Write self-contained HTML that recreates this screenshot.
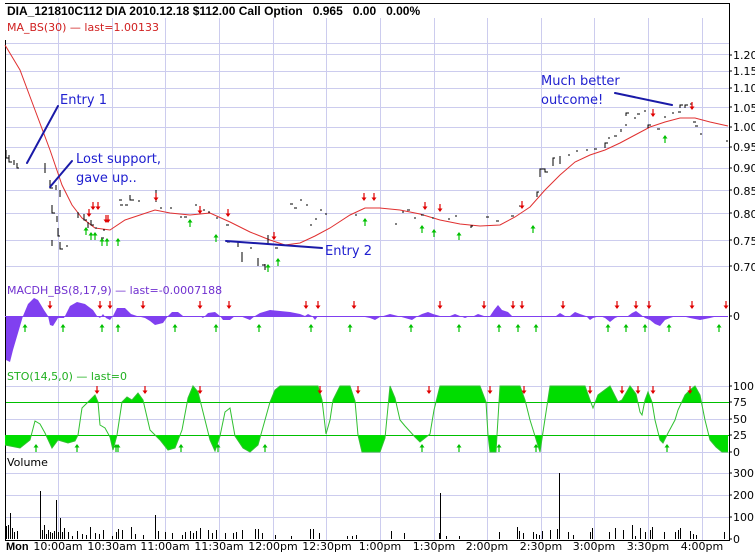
<!DOCTYPE html>
<html><head><meta charset="utf-8"><style>
html,body{margin:0;padding:0;background:#fff;}
svg{display:block;}
text{font-family:"DejaVu Sans","Liberation Sans",sans-serif;}
</style></head><body>
<svg width="755" height="552" viewBox="0 0 755 552" xmlns="http://www.w3.org/2000/svg">
<defs>
<g id="dn"><path d="M0,-4V3" stroke="#e00000" stroke-width="1.2"/><path d="M-2.5,0.5L0,4L2.5,0.5Z" fill="#e00000"/></g>
<g id="up"><path d="M0,-3V4" stroke="#00c000" stroke-width="1.2"/><path d="M-2.5,-0.5L0,-4L2.5,-0.5Z" fill="#00c000"/></g>
<clipPath id="hi"><rect x="5" y="380" width="724" height="22"/></clipPath>
<clipPath id="lo"><rect x="5" y="435" width="724" height="20"/></clipPath>
</defs>
<rect width="755" height="552" fill="#fff"/>
<g stroke="#ccccee" stroke-width="1" shape-rendering="crispEdges">
<path d="M58.5 18V540M112.5 18V540M165.5 18V540M219.5 18V540M273.5 18V540M326.5 18V540M380.5 18V540M434.5 18V540M487.5 18V540M541.5 18V540M594.5 18V540M648.5 18V540M702.5 18V540"/>
<path d="M5 43.5H729M5 54.5H729M5 71.5H729M5 88.5H729M5 107.5H729M5 127.5H729M5 147.5H729M5 168.5H729M5 190.5H729M5 213.5H729M5 240.5H729M5 266.5H729"/>
<path d="M5 386.5H729M5 419.5H729M5 452.5H729M5 473.5H729M5 495.5H729M5 517.5H729"/>
</g>
<g stroke="#00c000" stroke-width="1" shape-rendering="crispEdges"><path d="M5 402.5H729M5 435.5H729"/></g>
<path d="M5.5 40V540.5H729.5V3.5H5" fill="none" stroke="#000" stroke-width="1" shape-rendering="crispEdges"/>
<text x="7" y="15" font-size="12" font-weight="bold" fill="#000" style="font-family:'Liberation Sans',sans-serif">DIA_121810C112 DIA 2010.12.18 $112.00 Call Option&#160;&#160; 0.965&#160;&#160; 0.00&#160;&#160; 0.00%</text>
<text x="7" y="31" font-size="11" fill="#d02020">MA_BS(30) — last=1.00133</text>
<g stroke="#000" shape-rendering="crispEdges"><path d="M729 55h3M729 71h3M729 88h3M729 107h3M729 127h3M729 147h3M729 168h3M729 190h3M729 213h3M729 240h3M729 266h3M729 316h3M729 386h3M729 402h3M729 419h3M729 435h3M729 452h3M729 473h3M729 495h3M729 517h3M729 539h3"/></g>
<g font-size="11" fill="#000">
<text x="733" y="59">1.20</text><text x="733" y="75">1.15</text><text x="733" y="92">1.10</text><text x="733" y="112">1.05</text><text x="733" y="131">1.00</text><text x="733" y="151">0.95</text><text x="733" y="172">0.90</text><text x="733" y="195">0.85</text><text x="733" y="218">0.80</text><text x="733" y="245">0.75</text><text x="733" y="271">0.70</text>
<text x="733" y="320">0</text>
<text x="733" y="390">100</text><text x="733" y="406">75</text><text x="733" y="423">50</text><text x="733" y="439">25</text><text x="733" y="456">0</text>
<text x="733" y="477">300</text><text x="733" y="499">200</text><text x="733" y="521">100</text><text x="733" y="543">0</text>
</g>
<polyline fill="none" stroke="#e03030" stroke-width="1" points="5,45 20,70 35,110 50,150 62,185 72,205 82,218 95,228 110,230 125,220 140,215 155,210 170,213 190,215 210,213 230,222 250,232 270,240 285,245 300,243 315,236 330,228 350,215 365,208 380,208 400,210 420,214 440,220 460,224 480,226 500,225 515,217 530,207 545,190 560,175 575,162 590,155 605,150 620,143 635,135 650,127 665,122 680,118 695,118 710,122 728,126"/>
<g stroke="#000" stroke-width="1" fill="none" shape-rendering="crispEdges">
<path d="M6 150v8h3M9 155v7h3M14 160v5M17 163v5h2M45 163v10M50 180v8h3M56 185v5M60 190v7M52 205v8h3M57 216v6M58 228v8h2M52 240v6M60 242v7h3M66 246h2M88 222v6M78 212v6M84 214v6h3M91 220v5h3M95 228h2M103 230h2M101 238h3M119 200h3M120 205h3M125 205h3M130 195v5h3M131 200h3M138 201h2M156 190v12M160 208h2M170 208h2M180 217h2M184 217h3M195 205h2M203 210h2M208 212h2M216 218h2M226 225h3M227 242h3M238 242v5M242 252v10M250 248h2M258 258v8M262 265h3M265 264v6M268 235v10M275 248h3M290 204h3M294 208h3M300 200h2M306 205h2M310 225h2M315 219h2M320 210h2M325 214h2M355 215h2M395 224h2M402 212h2M407 210h3M414 218h2M421 215h3M432 218h2M448 219h2M455 216h2M471 228v-2h2M486 217h3M496 221h3M511 216h3M519 206h2M537 197v-5h2M540 177v-8h2h3v3h3M553 166v-8h2M560 164v-8M568 155h2M576 151h2M586 150h2M594 149h3M605 148v-5h3M608 138h2M614 136h3M621 132v-3M625 125h2M626 116v-3h3M634 118h2M637 114h3M644 111h2M648 128v-3h3M657 129h3M664 117h2M672 113h2M678 112h3M680 108v-3h3M685 108v-3h3M690 104h2M693 122h3M695 126h3M700 134h2M726 141h2"/>
</g>
<g>
<use href="#dn" x="93" y="206"/><use href="#dn" x="98" y="206"/><use href="#dn" x="89" y="213"/><use href="#dn" x="106" y="219"/><use href="#dn" x="108" y="219"/><use href="#dn" x="156" y="197"/><use href="#dn" x="200" y="210"/><use href="#dn" x="228" y="213"/><use href="#dn" x="274" y="236"/><use href="#dn" x="364" y="197"/><use href="#dn" x="374" y="197"/><use href="#dn" x="425" y="206"/><use href="#dn" x="440" y="208"/><use href="#dn" x="522" y="205"/><use href="#dn" x="653" y="113"/><use href="#dn" x="692" y="106"/>
<use href="#up" x="86" y="231"/><use href="#up" x="91" y="236"/><use href="#up" x="95" y="236"/><use href="#up" x="102" y="242"/><use href="#up" x="107" y="242"/><use href="#up" x="118" y="242"/><use href="#up" x="190" y="223"/><use href="#up" x="216" y="238"/><use href="#up" x="268" y="268"/><use href="#up" x="278" y="262"/><use href="#up" x="365" y="222"/><use href="#up" x="422" y="229"/><use href="#up" x="434" y="233"/><use href="#up" x="459" y="236"/><use href="#up" x="533" y="229"/><use href="#up" x="665" y="139"/>
</g>
<g stroke="#1a1aa8" stroke-width="2" fill="none" stroke-linecap="round">
<path d="M27 163L58 106"/><path d="M50 187L72 161"/><path d="M226 241L322 248"/><path d="M615 93L672 105"/>
</g>
<g font-size="13" fill="#2020d0">
<text x="60" y="104">Entry 1</text>
<text x="76" y="163">Lost support,</text>
<text x="76" y="182">gave up..</text>
<text x="325" y="255">Entry 2</text>
<text x="541" y="85">Much better</text>
<text x="541" y="104">outcome!</text>
</g>
<text x="7" y="294" font-size="11" fill="#7030d0">MACDH_BS(8,17,9) — last=-0.0007188</text>
<path fill="#8040f0" d="M6 316L6 360L10 362L13 350L18 333L23 316L28 304L34 298L38 300L44 310L48 316L50 325L53 326L58 318L64 318L70 306L77 302L85 304L93 310L97 316L100 318L103 314L106 318L110 320L113 316L117 308L125 308L131 314L137 316L145 318L150 321L155 325L163 323L168 316L172 312L178 312L183 316L190 316L200 316L203 318L205 316L208 313L215 312L220 316L223 320L230 320L235 316L240 316L245 318L250 320L255 316L260 313L270 310L280 311L290 312L300 314L305 316L308 314L312 316L315 320L318 316L320 316L330 316L340 316L345 317L350 316L360 316L370 318L375 320L380 317L390 314L398 316L405 318L412 320L418 316L422 314L428 312L433 314L440 316L450 316L455 314L460 316L465 318L470 316L474 316L478 314L484 316L490 316L494 310L498 305L502 310L508 312L512 316L518 316L530 317L545 317L556 316L560 313L565 316L570 316L575 312L580 314L586 316L590 320L593 318L600 316L605 318L610 322L615 318L620 316L628 316L632 313L636 311L640 314L645 318L650 320L655 324L660 326L665 320L670 318L676 316L682 316L690 318L700 320L710 318L718 316L728 316 Z"/>
<path d="M5 316.5H728" stroke="#8040f0" stroke-width="1"/>
<g>
<use href="#dn" x="50" y="305"/><use href="#dn" x="100" y="305"/><use href="#dn" x="110" y="305"/><use href="#dn" x="143" y="305"/><use href="#dn" x="200" y="305"/><use href="#dn" x="229" y="305"/><use href="#dn" x="306" y="305"/><use href="#dn" x="318" y="305"/><use href="#dn" x="354" y="305"/><use href="#dn" x="440" y="305"/><use href="#dn" x="484" y="305"/><use href="#dn" x="513" y="305"/><use href="#dn" x="522" y="305"/><use href="#dn" x="563" y="305"/><use href="#dn" x="617" y="305"/><use href="#dn" x="636" y="305"/><use href="#dn" x="649" y="305"/><use href="#dn" x="692" y="305"/><use href="#dn" x="726" y="305"/>
<use href="#up" x="25" y="328"/><use href="#up" x="63" y="328"/><use href="#up" x="102" y="328"/><use href="#up" x="118" y="328"/><use href="#up" x="175" y="328"/><use href="#up" x="216" y="328"/><use href="#up" x="259" y="328"/><use href="#up" x="311" y="328"/><use href="#up" x="350" y="328"/><use href="#up" x="411" y="328"/><use href="#up" x="459" y="328"/><use href="#up" x="499" y="328"/><use href="#up" x="518" y="328"/><use href="#up" x="536" y="328"/><use href="#up" x="608" y="328"/><use href="#up" x="626" y="328"/><use href="#up" x="645" y="328"/><use href="#up" x="669" y="328"/><use href="#up" x="719" y="328"/>
</g>
<text x="7" y="380" font-size="11" fill="#20b020">STO(14,5,0) — last=0</text>
<g clip-path="url(#hi)"><polygon fill="#00dd00" points="5,402 5,445 20,448 30,440 35,421 40,424 45,433 52,448 58,440 68,443 75,441 78,435 82,408 88,402 95,395 98,402 100,425 105,428 110,437 113,450 117,435 122,402 127,397 132,400 138,393 143,400 150,430 160,440 168,450 175,448 182,430 188,398 193,386 198,392 203,412 210,440 215,451 220,436 225,412 230,408 235,436 243,448 250,452 258,445 265,420 270,402 275,390 280,386 300,386 318,386 322,400 326,434 330,420 333,400 340,386 350,386 355,401 358,435 362,452 380,452 385,438 390,386 395,398 400,420 405,426 415,437 420,442 425,438 430,434 434,410 440,386 480,386 486,402 488,435 490,452 496,452 497,435 500,386 520,386 525,400 530,420 535,436 540,452 543,432 550,386 585,386 590,400 593,408 598,395 610,386 618,402 622,400 630,386 636,394 640,412 642,415 645,400 648,392 652,402 655,420 660,440 663,443 668,433 675,420 678,410 685,395 690,390 695,386 700,395 705,420 710,440 716,447 722,452 728,452 728,402"/></g>
<g clip-path="url(#lo)"><polygon fill="#00dd00" points="5,435 5,445 20,448 30,440 35,421 40,424 45,433 52,448 58,440 68,443 75,441 78,435 82,408 88,402 95,395 98,402 100,425 105,428 110,437 113,450 117,435 122,402 127,397 132,400 138,393 143,400 150,430 160,440 168,450 175,448 182,430 188,398 193,386 198,392 203,412 210,440 215,451 220,436 225,412 230,408 235,436 243,448 250,452 258,445 265,420 270,402 275,390 280,386 300,386 318,386 322,400 326,434 330,420 333,400 340,386 350,386 355,401 358,435 362,452 380,452 385,438 390,386 395,398 400,420 405,426 415,437 420,442 425,438 430,434 434,410 440,386 480,386 486,402 488,435 490,452 496,452 497,435 500,386 520,386 525,400 530,420 535,436 540,452 543,432 550,386 585,386 590,400 593,408 598,395 610,386 618,402 622,400 630,386 636,394 640,412 642,415 645,400 648,392 652,402 655,420 660,440 663,443 668,433 675,420 678,410 685,395 690,390 695,386 700,395 705,420 710,440 716,447 722,452 728,452 728,435"/></g>
<polyline fill="none" stroke="#30c030" stroke-width="1" points="5,445 20,448 30,440 35,421 40,424 45,433 52,448 58,440 68,443 75,441 78,435 82,408 88,402 95,395 98,402 100,425 105,428 110,437 113,450 117,435 122,402 127,397 132,400 138,393 143,400 150,430 160,440 168,450 175,448 182,430 188,398 193,386 198,392 203,412 210,440 215,451 220,436 225,412 230,408 235,436 243,448 250,452 258,445 265,420 270,402 275,390 280,386 300,386 318,386 322,400 326,434 330,420 333,400 340,386 350,386 355,401 358,435 362,452 380,452 385,438 390,386 395,398 400,420 405,426 415,437 420,442 425,438 430,434 434,410 440,386 480,386 486,402 488,435 490,452 496,452 497,435 500,386 520,386 525,400 530,420 535,436 540,452 543,432 550,386 585,386 590,400 593,408 598,395 610,386 618,402 622,400 630,386 636,394 640,412 642,415 645,400 648,392 652,402 655,420 660,440 663,443 668,433 675,420 678,410 685,395 690,390 695,386 700,395 705,420 710,440 716,447 722,452 728,452"/>
<g>
<use href="#dn" x="97" y="390"/><use href="#dn" x="145" y="390"/><use href="#dn" x="200" y="390"/><use href="#dn" x="320" y="390"/><use href="#dn" x="358" y="390"/><use href="#dn" x="429" y="390"/><use href="#dn" x="490" y="390"/><use href="#dn" x="524" y="390"/><use href="#dn" x="590" y="390"/><use href="#dn" x="622" y="390"/><use href="#dn" x="638" y="390"/><use href="#dn" x="653" y="390"/><use href="#dn" x="690" y="390"/>
<use href="#up" x="36" y="448"/><use href="#up" x="77" y="448"/><use href="#up" x="116" y="448"/><use href="#up" x="118" y="448"/><use href="#up" x="181" y="448"/><use href="#up" x="218" y="448"/><use href="#up" x="265" y="448"/><use href="#up" x="422" y="448"/><use href="#up" x="459" y="448"/><use href="#up" x="499" y="448"/><use href="#up" x="536" y="448"/><use href="#up" x="667" y="448"/>
</g>
<text x="7" y="466" font-size="11" fill="#000">Volume</text>
<g stroke="#000" stroke-width="1" shape-rendering="crispEdges">
<path d="M6.5 539V526M8.5 539V525M10.5 539V513M12.5 539V528M14.5 539V532M17.5 539V531M24.5 539V539M40.5 539V491M42.5 539V530M44.5 539V525M46.5 539V534M48.5 539V530M50.5 539V532M52.5 539V533M54.5 539V531M56.5 539V500M58.5 539V532M60.5 539V518M62.5 539V532M64.5 539V528M68.5 539V532M72.5 539V536M77.5 539V531M82.5 539V534M86.5 539V535M90.5 539V527M95.5 539V533M99.5 539V534M103.5 539V530M112.5 539V536M116.5 539V532M118.5 539V529M122.5 539V530M131.5 539V527M135.5 539V534M143.5 539V535M155.5 539V515M158.5 539V531M165.5 539V532M172.5 539V533M182.5 539V535M185.5 539V532M190.5 539V531M193.5 539V533M196.5 539V531M200.5 539V528M208.5 539V530M212.5 539V533M216.5 539V530M225.5 539V533M233.5 539V533M236.5 539V532M242.5 539V530M255.5 539V529M258.5 539V529M262.5 539V533M275.5 539V535M291.5 539V536M310.5 539V529M313.5 539V529M319.5 539V533M347.5 539V536M352.5 539V536M356.5 539V535M391.5 539V531M404.5 539V533M440.5 539V493M439.5 539V533M446.5 539V536M459.5 539V536M499.5 539V532M517.5 539V527M519.5 539V531M523.5 539V533M533.5 539V532M536.5 539V534M539.5 539V535M542.5 539V531M550.5 539V530M559.5 539V473M557.5 539V529M568.5 539V532M573.5 539V535M590.5 539V532M592.5 539V528M609.5 539V532M615.5 539V528M623.5 539V530M632.5 539V525M635.5 539V536M640.5 539V528M645.5 539V532M650.5 539V530M652.5 539V527M664.5 539V532M675.5 539V532M678.5 539V530M680.5 539V528M690.5 539V531M693.5 539V534M696.5 539V535M724.5 539V532"/>
</g>
<g font-size="11" fill="#000">
<text x="6" y="550" font-weight="bold" style="font-family:'Liberation Sans',sans-serif">Mon</text>
<text x="58" y="550" text-anchor="middle">10:00am</text><text x="112" y="550" text-anchor="middle">10:30am</text><text x="165" y="550" text-anchor="middle">11:00am</text><text x="219" y="550" text-anchor="middle">11:30am</text><text x="273" y="550" text-anchor="middle">12:00pm</text><text x="327" y="550" text-anchor="middle">12:30pm</text><text x="380" y="550" text-anchor="middle">1:00pm</text><text x="434" y="550" text-anchor="middle">1:30pm</text><text x="487" y="550" text-anchor="middle">2:00pm</text><text x="541" y="550" text-anchor="middle">2:30pm</text><text x="594" y="550" text-anchor="middle">3:00pm</text><text x="648" y="550" text-anchor="middle">3:30pm</text><text x="702" y="550" text-anchor="middle">4:00pm</text>
</g>
</svg>
</body></html>
